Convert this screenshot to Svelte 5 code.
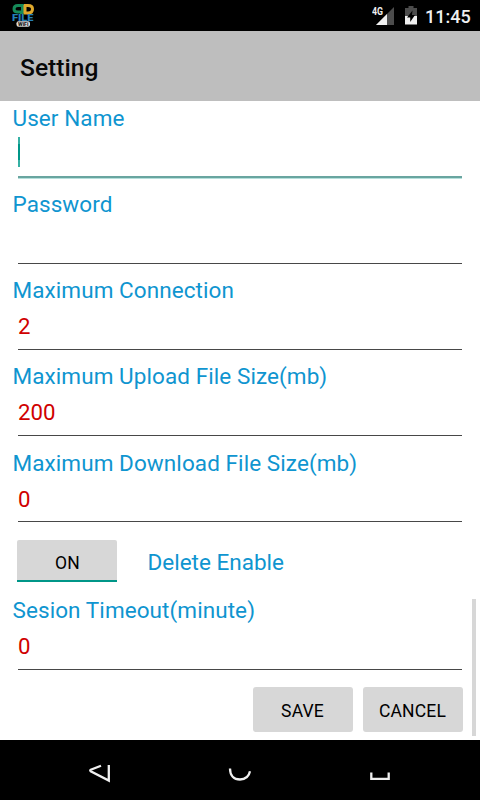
<script>
  const fields = $state([
    { label: 'User Name', value: '', focused: true },
    { label: 'Password', value: '' },
    { label: 'Maximum Connection', value: '2' },
    { label: 'Maximum Upload File Size(mb)', value: '200' },
    { label: 'Maximum Download File Size(mb)', value: '0' }
  ]);
  const timeout = $state({ label: 'Sesion Timeout(minute)', value: '0' });
</script>

{#snippet field(f)}
  <div class="field">
    <div class="label">{f.label}</div>
    <div class="input" class:focused={f.focused}>
      {#if f.focused}<span class="caret"></span>{/if}
      <span>{f.value}</span>
    </div>
  </div>
{/snippet}

<div class="screen">
  <header class="status">
    <svg class="logo" width="24" height="24" viewBox="0 0 24 24">
      <path d="M10.500 2.500H6C3.500 2.500 2 3.800 2 6S3.500 9 6 9h4.500zM9.500 9v2" fill="none" stroke="#168a59" stroke-width="3" />
      <path d="M13 2v8h3c3 0 4.500-1.500 4.500-4S19 2.500 16 2.500h-4" fill="none" stroke="#e0a92c" stroke-width="3" />
      <text x="0" y="17.600" textLength="21.500" lengthAdjust="spacingAndGlyphs" class="file">FILE</text>
      <rect x="4.500" y="18.300" width="13.500" height="5.500" rx="2" fill="#ddd" />
      <text x="6" y="22.900" textLength="10.500" lengthAdjust="spacingAndGlyphs" class="wifi">WiFi</text>
    </svg>
    <div class="indicators">
      <svg width="24" height="20" viewBox="0 0 24 20">
        <path d="M22 1v18H4z" fill="#4c4c4c" />
        <path d="M15 8v11H4z" fill="#f0f0f0" />
        <path d="M0 0h12v9H0z" fill="#000" />
        <text x="0" y="8.500" textLength="11" lengthAdjust="spacingAndGlyphs" class="net">4G</text>
      </svg>
      <svg class="battery" width="12" height="19" viewBox="0 0 12 19">
        <path d="M0 2h3.500V0h5v2H12v8H0z" fill="#4c4c4c" />
        <path d="M0 10h12v8.500H0z" fill="#f0f0f0" />
        <path d="M7.500 4.500L2 11.500h3.200v4.500L10 9H7z" fill="#000" />
      </svg>
      <span class="clock">11:45</span>
    </div>
  </header>
  <div class="appbar">Setting</div>
  <main>
    {#each fields as f}{@render field(f)}{/each}
    <div class="toggle-row">
      <button class="toggle">ON</button>
      <span class="toggle-label">Delete Enable</span>
    </div>
    {@render field(timeout)}
    <div class="actions">
      <button>SAVE</button>
      <button>CANCEL</button>
    </div>
    <div class="scrollbar"></div>
  </main>
  <nav>
    <svg width="140" height="60" viewBox="30 740 140 60"><path d="M101 765.700L90.700 769.800Q89.700 770.300 90.700 771.200L108.800 780.500V765" /></svg>
    <svg width="140" height="60" viewBox="170 740 140 60"><path d="M230 768.500C230 775.500 234 779.500 240 779.500C245.500 779.500 249 776 250 771.300" /></svg>
    <svg width="140" height="60" viewBox="310 740 140 60"><path d="M371.300 772.500V778.800H388.700V772.500" /></svg>
  </nav>
</div>

<style>
  .screen {
    width: 480px;
    height: 800px;
    display: flex;
    flex-direction: column;
    overflow: hidden;
    background: #fff;
    font-family: Roboto, sans-serif;
  }
  .status {
    height: 31px;
    flex: none;
    display: flex;
    justify-content: space-between;
    background: #000;
    color: #f0f0f0;
  }
  .logo { margin: 3px 0 0 12px; }
  .file { font: 900 9px Roboto, sans-serif; fill: #2580b8; }
  .wifi { font: 900 4.500px Roboto, sans-serif; fill: #222; }
  .net { font: 700 10px Roboto, sans-serif; fill: #f0f0f0; }
  .indicators {
    display: flex;
    align-items: flex-start;
    padding: 6px 10px 0 0;
  }
  .battery { margin: 0 8px 0 9px; }
  .clock {
    width: 45px;
    font-size: 18px;
    font-weight: 500;
    line-height: 22px;
    white-space: nowrap;
  }
  .appbar {
    height: 70px;
    flex: none;
    box-sizing: border-box;
    padding: 2px 20px 0;
    display: flex;
    align-items: center;
    background: #bebebe;
    color: #080808;
    font-size: 24.600px;
    font-weight: 500;
  }
  main {
    position: relative;
    height: 639px;
    flex: none;
    background: #fff;
  }
  .field {
    height: 86.150px;
    display: flex;
    flex-direction: column;
  }
  .label {
    height: 33px;
    padding-left: 12.500px;
    font-size: 22.500px;
    font-weight: 400;
    letter-spacing: 0.080px;
    line-height: 35px;
    color: #0f95d0;
    white-space: nowrap;
  }
  .input {
    height: 42.500px;
    margin: 0 18px;
    border-bottom: 1px solid #484848;
    display: flex;
    color: #d00000;
    font-size: 22.200px;
    line-height: 40px;
  }
  .input.focused {
    border-bottom: 2px solid #69a5a0;
    height: 42px;
    box-shadow: 0 1px #b5e0dc;
  }
  .caret {
    width: 2px;
    height: 30px;
    margin-top: 3px;
    background: linear-gradient(#35b0a4 7px, #009688 7px 23px, #35b0a4 23px);
  }
  .toggle-row {
    height: 61.700px;
    display: flex;
    align-items: flex-start;
  }
  button {
    width: 100px;
    height: 45px;
    padding: 2px 0 0;
    border: 0;
    border-radius: 3px;
    background: #d7d7d7;
    color: #000;
    font: 400 17.500px Roboto, sans-serif;
    letter-spacing: 0.150px;
  }
  .toggle {
    height: 42px;
    margin: 8px 30.100px 0 17.400px;
    padding: 6px 0 0;
    border-bottom: 2px solid #009688;
    border-radius: 2px 2px 0 0;
  }
  .toggle-label {
    color: #0f95d0;
    font-size: 22.500px;
    line-height: 60.500px;
  }
  .actions {
    display: flex;
    justify-content: flex-end;
    gap: 10px;
    padding: 7.700px 17.500px 0 0;
  }
  .scrollbar {
    position: absolute;
    right: 4px;
    top: 498px;
    width: 4px;
    height: 137px;
    background: #d7d7d7;
  }
  nav {
    height: 60px;
    flex: none;
    display: flex;
    justify-content: center;
    background: #000;
  }
  nav path { fill: none; stroke: #f0f0f0; stroke-width: 2.300; }
</style>
